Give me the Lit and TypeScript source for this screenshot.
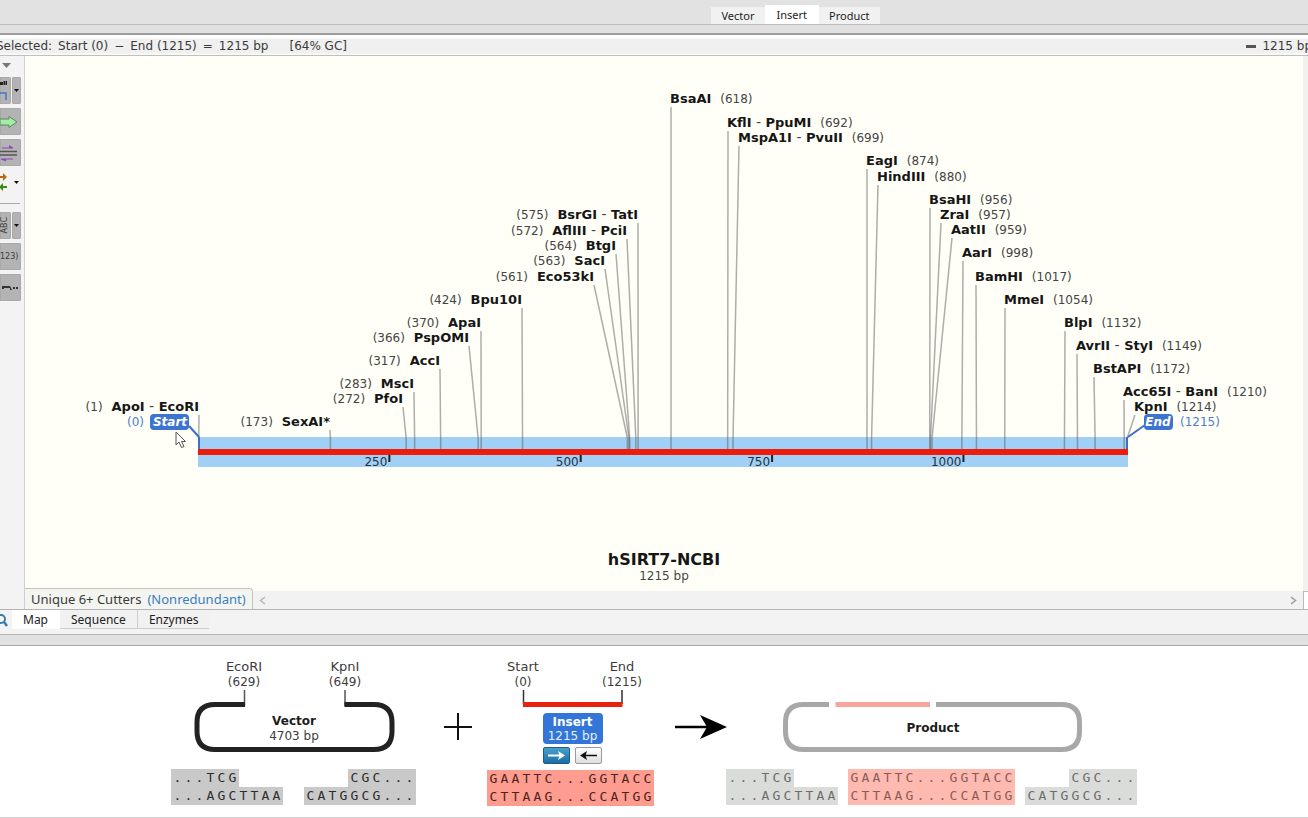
import { LitElement, html, svg, css } from "lit";
import { customElement, state } from "lit/decorators.js";

interface Site {
  names: string[];
  bp: number;
  anchor: number;
  base: number;
}

/* Anchors are measured on a 1278-unit wide map and drawn as percentages. */
const MAP_WIDTH = 1278;
const SEQ_START = 173;
const SEQ_END = 1103;
const LENGTH = 1215;
const pct = (x: number) => `${(x / MAP_WIDTH) * 100}%`;
const bpX = (bp: number) => SEQ_START + ((SEQ_END - SEQ_START) * bp) / LENGTH;

const leftSites: Site[] = [
  { names: ["ApoI", "EcoRI"], bp: 1, anchor: 174, base: 355 },
  { names: ["SexAI*"], bp: 173, anchor: 305, base: 370 },
  { names: ["PfoI"], bp: 272, anchor: 378, base: 347 },
  { names: ["MscI"], bp: 283, anchor: 389, base: 332 },
  { names: ["AccI"], bp: 317, anchor: 415, base: 309 },
  { names: ["PspOMI"], bp: 366, anchor: 444, base: 286 },
  { names: ["ApaI"], bp: 370, anchor: 456, base: 271 },
  { names: ["Bpu10I"], bp: 424, anchor: 497, base: 248 },
  { names: ["Eco53kI"], bp: 561, anchor: 569, base: 225 },
  { names: ["SacI"], bp: 563, anchor: 580, base: 209 },
  { names: ["BtgI"], bp: 564, anchor: 591, base: 194 },
  { names: ["AflIII", "PciI"], bp: 572, anchor: 602, base: 179 },
  { names: ["BsrGI", "TatI"], bp: 575, anchor: 613, base: 163 },
];

const rightSites: Site[] = [
  { names: ["BsaAI"], bp: 618, anchor: 645, base: 47 },
  { names: ["KflI", "PpuMI"], bp: 692, anchor: 702, base: 71 },
  { names: ["MspA1I", "PvuII"], bp: 699, anchor: 713, base: 86 },
  { names: ["EagI"], bp: 874, anchor: 841, base: 109 },
  { names: ["HindIII"], bp: 880, anchor: 852, base: 125 },
  { names: ["BsaHI"], bp: 956, anchor: 904, base: 148 },
  { names: ["ZraI"], bp: 957, anchor: 915, base: 163 },
  { names: ["AatII"], bp: 959, anchor: 926, base: 178 },
  { names: ["AarI"], bp: 998, anchor: 937, base: 201 },
  { names: ["BamHI"], bp: 1017, anchor: 950, base: 225 },
  { names: ["MmeI"], bp: 1054, anchor: 979, base: 248 },
  { names: ["BlpI"], bp: 1132, anchor: 1039, base: 271 },
  { names: ["AvrII", "StyI"], bp: 1149, anchor: 1051, base: 294 },
  { names: ["BstAPI"], bp: 1172, anchor: 1068, base: 317 },
  { names: ["Acc65I", "BanI"], bp: 1210, anchor: 1098, base: 340 },
  { names: ["KpnI"], bp: 1214, anchor: 1109, base: 355 },
];

@customElement("restriction-map")
class RestrictionMap extends LitElement {
  static styles = css`
    :host { display: block; background: #fffff8; }
    .map { display: block; width: 100%; height: 535px; }
    text { font: 12px "DejaVu Sans", sans-serif; fill: #444; white-space: pre; }
    .name { font: bold 13px "DejaVu Sans", sans-serif; fill: #161616; }
    .space { font-size: 14px; }
    .leader { stroke: #5c5c5c; stroke-opacity: 0.5; stroke-width: 1.5; }
    .tick { stroke: #222; stroke-width: 2; }
    .edge { stroke: #3d6fc4; stroke-width: 2; }
    .chip { fill: #3c74cf; }
    .end { font: italic bold 12px "DejaVu Sans", sans-serif; fill: #fff; }
    .blue { fill: #4e7ecb; }
    .title { font: bold 16px "DejaVu Sans", sans-serif; fill: #161616; }
    .scale { fill: #26323c; }
    .mid { text-anchor: middle; }
    .right { text-anchor: end; }
  `;

  private leader(s: Site, dx: number) {
    const x = bpX(s.bp);
    return svg`
      <line class="leader" x1=${pct(s.anchor + dx)} y1=${s.base + 4} x2=${pct(x)} y2="382"></line>
      <line class="leader" x1=${pct(x)} y1="382" x2=${pct(x)} y2="394"></line>`;
  }

  private names(s: Site) {
    return s.names.map((n, i) =>
      i ? svg`<tspan class="space"> - </tspan><tspan class="name">${n}</tspan>` : svg`<tspan class="name">${n}</tspan>`);
  }

  render() {
    return html`<svg class="map" role="img" aria-label="Map of hSIRT7-NCBI">
      <rect x=${pct(SEQ_START)} y="381" width=${pct(SEQ_END - SEQ_START)} height="30" fill="#a0d0f5"></rect>
      ${leftSites.map((s) => svg`${this.leader(s, 0)}
        <text class="right" x=${pct(s.anchor)} y=${s.base}><tspan>(${s.bp})</tspan><tspan class="space">  </tspan>${this.names(s)}</text>`)}
      ${rightSites.map((s) => svg`${this.leader(s, 1)}
        <text x=${pct(s.anchor)} y=${s.base}>${this.names(s)}<tspan class="space">  </tspan><tspan>(${s.bp})</tspan></text>`)}
      <line class="edge" x1=${pct(164)} y1="370" x2=${pct(174)} y2="381"></line>
      <line class="edge" x1=${pct(174)} y1="381" x2=${pct(174)} y2="394"></line>
      <line class="edge" x1=${pct(1120)} y1="369" x2=${pct(1103)} y2="381"></line>
      <line class="edge" x1=${pct(1102)} y1="381" x2=${pct(1102)} y2="394"></line>
      <rect x=${pct(SEQ_START)} y="393" width=${pct(SEQ_END - SEQ_START)} height="6" fill="#ee1c0c"></rect>
      ${[250, 500, 750, 1000].map((n) => svg`
        <line class="tick" x1=${pct(bpX(n))} y1="399" x2=${pct(bpX(n))} y2="406"></line>
        <text class="scale right" x=${pct(bpX(n) - 2)} y="410">${n}</text>`)}
      <text class="blue right" x=${pct(119)} y="370">(0)</text>
      <svg x=${pct(125)} y="358" width="39" height="17" overflow="visible">
        <rect class="chip" width="39" height="16" rx="4"></rect>
        <text class="end mid" x="20" y="12">Start</text>
      </svg>
      <svg x=${pct(1119)} y="358" width="29" height="17" overflow="visible">
        <rect class="chip" width="29" height="16" rx="4"></rect>
        <text class="end mid" x="14" y="12">End</text>
      </svg>
      <text class="blue" x=${pct(1155)} y="370">(1215)</text>
      <text class="title mid" x="50%" y="509">hSIRT7-NCBI</text>
      <text class="mid" x="50%" y="524">1215 bp</text>
      <svg x=${pct(150)} y="375" width="12" height="18">
        <path d="M1 1V14L4 11L6.500 16.500L9 15.500L6.500 10.500H10.500Z" fill="#fff" stroke="#555" stroke-width="1"></path>
      </svg>
    </svg>`;
  }
}

@customElement("cloning-strip")
class CloningStrip extends LitElement {
  static styles = css`
    :host { display: flex; justify-content: center; padding-top: 10px; background: #fff; }
    .strip { display: grid; grid-template-columns: auto 71px auto 72px auto; }
    .col { display: flex; flex-direction: column; align-items: center; }
    .art { display: block; overflow: visible; }
    text { font: 12px "DejaVu Sans", sans-serif; fill: #3c3c3c; text-anchor: middle; }
    .enzyme { font: 13px "DejaVu Sans", sans-serif; }
    .strong { font: bold 12px "DejaVu Sans", sans-serif; fill: #1c1c1c; }
    .chip {
      width: 60px; height: 31px; margin: 0 0 0 4px; padding: 0; border: 0; border-radius: 4px;
      background: #3476d8; color: #e4efff; font: 12px/14px "DejaVu Sans", sans-serif; white-space: nowrap;
    }
    .chip b { display: block; color: #fff; }
    .arrows { display: flex; gap: 5px; padding: 3px 0 6px 4px; }
    .dir {
      display: flex; width: 27px; height: 17px; padding: 0; align-items: center; justify-content: center;
      border: 1px solid #9a9a9a; border-radius: 2px; background: linear-gradient(#fff, #dedede);
    }
    .dir.on { border-color: #1a5c8a; background: linear-gradient(#4a9fc9, #1a6ea5); }
    .seqs { display: flex; justify-content: space-between; align-self: stretch; gap: 10px; }
    .seq { display: flex; flex-direction: column; align-items: flex-start; }
    .seq.end { align-items: flex-end; }
    .row { display: flex; height: 18px; padding: 0 1px; background: #c9c9c9; color: #2c2c2c; font: 13px/18px "DejaVu Sans Mono", monospace; }
    .row span { width: 11px; text-align: center; }
    .ins .row { background: #fe9c8f; color: #4c221c; }
    .faded .row { background: #dadcda; color: #6c6c6c; }
    .faded .ins .row { background: #feb9b0; color: #8a5c56; }
  `;

  @state() private forward = true;

  private strand(t: string) {
    return html`<div class="row">${[...t].map((c) => html`<span>${c}</span>`)}</div>`;
  }

  private seq(kind: string, top: string, bottom: string) {
    return html`<div class="seq ${kind}">${this.strand(top)}${this.strand(bottom)}</div>`;
  }

  render() {
    const left = this.seq("", "...TCG", "...AGCTTAA");
    const insert = this.seq("ins", "GAATTC...GGTACC", "CTTAAG...CCATGG");
    const right = this.seq("end", "CGC...", "CATGGCG...");
    return html`<div class="strip">
      <div class="col">
        <svg class="art" width="245" height="113">
          <g fill="none">
            <path d="M73.500 34V50M174 34V50" stroke="#555" stroke-width="1.500"></path>
            <path d="M74 48.500H44Q26 48.500 26 66.500V75.500Q26 93.500 44 93.500H203Q221 93.500 221 75.500V66.500Q221 48.500 203 48.500H173.500" stroke="#222" stroke-width="5"></path>
          </g>
          <text class="enzyme" x="73" y="15">EcoRI</text><text x="73" y="30">(629)</text>
          <text class="enzyme" x="174" y="15">KpnI</text><text x="174" y="30">(649)</text>
          <text class="strong" x="123" y="69">Vector</text><text x="123" y="84">4703 bp</text>
        </svg>
        <div class="seqs">${left}${right}</div>
      </div>
      <svg class="art" width="71" height="113" aria-hidden="true">
        <path d="M28 71H56M42 57V84" stroke="#111" stroke-width="2"></path>
      </svg>
      <div class="col">
        <svg class="art" width="167" height="57">
          <path d="M36.500 34V48M135 34V48" stroke="#333" stroke-width="1.500"></path>
          <path d="M36 48.500H135.500" stroke="#e8220f" stroke-width="5"></path>
          <text class="enzyme" x="36" y="15">Start</text><text x="36" y="30">(0)</text>
          <text class="enzyme" x="135" y="15">End</text><text x="135" y="30">(1215)</text>
        </svg>
        <button class="chip"><b>Insert</b>1215 bp</button>
        <div class="arrows">
          <button class="dir ${this.forward ? "on" : ""}" aria-label="Forward" @click=${() => (this.forward = true)}>
            <svg width="19" height="9"><path d="M1 4.500H13" stroke="#fff" stroke-width="2"></path><path d="M11 0L18 4.500L11 9L12.500 4.500Z" fill="#fff"></path></svg>
          </button>
          <button class="dir ${this.forward ? "" : "on"}" aria-label="Reverse" @click=${() => (this.forward = false)}>
            <svg width="19" height="9"><path d="M6 4.500H18" stroke="#111" stroke-width="1.500"></path><path d="M8 0L1 4.500L8 9L6.500 4.500Z" fill="#111"></path></svg>
          </button>
        </div>
        <div class="seqs">${insert}</div>
      </div>
      <svg class="art" width="72" height="113" aria-hidden="true">
        <path d="M21 71H54" stroke="#000" stroke-width="2.500"></path>
        <path d="M46 59L73 71L46 83L53 71Z" fill="#000"></path>
      </svg>
      <div class="col">
        <svg class="art" width="411" height="113">
          <g fill="none" stroke-width="5">
            <path d="M103 48.500H77.500Q59.500 48.500 59.500 66.500V75.500Q59.500 93.500 77.500 93.500H335.500Q353.500 93.500 353.500 75.500V66.500Q353.500 48.500 335.500 48.500H210" stroke="#a8a8a8"></path>
            <path d="M109.500 48.500H204" stroke="#f6a69d"></path>
          </g>
          <text class="strong" x="207" y="76">Product</text>
        </svg>
        <div class="seqs faded">${left}${insert}${right}</div>
      </div>
    </div>`;
  }
}

@customElement("app-root")
class AppRoot extends LitElement {
  static styles = css`
    :host { display: flex; flex-direction: column; min-height: 100vh; overflow: hidden; background: #fff; color: #3a3a3a; font: 12px "DejaVu Sans", sans-serif; }
    button { margin: 0; padding: 0; border: 0; font: inherit; color: inherit; }
    .top { display: flex; align-items: flex-end; justify-content: center; height: 24px; padding-left: 283px; border-bottom: 1px solid #bdbdbd; background: #e2e2e2; }
    .tab { height: 17px; padding: 0 10px; background: #f1f1f1; font: 11px/17px "Noto Sans", sans-serif; color: #222; }
    .top .on { height: 19px; padding: 0 12px; background: #fff; }
    .divider { height: 8px; border-bottom: 2px solid #9c9c9c; background: #e1e1e1; }
    .info { display: flex; align-items: center; gap: 6px; height: 18px; padding-top: 2px; border-bottom: 1px solid #bfbfbf; background: linear-gradient(#fff 3px, #f0f0f0 4px, #f0f0f0 18px, #fafafa 19px); white-space: pre; }
    .info .first { margin-left: -4px; }
    .info .gc { margin-left: 15px; }
    .info .length { display: flex; align-items: center; gap: 6px; margin: 0 -4px 0 auto; }
    .bar { width: 10px; height: 3px; background: #555; }
    .body { display: flex; }
    .tools { display: flex; flex-direction: column; width: 25px; gap: 4px; border-right: 1px solid #cfcfcf; background: #f3f3f3; box-sizing: border-box; overflow: hidden; }
    .tool { display: flex; align-items: center; width: 21px; height: 27px; border-radius: 0 2px 2px 0; background: #b3b3b3; box-shadow: inset 0 0 0 1px #a9a9a9; overflow: hidden; font-size: 8px; }
    .split { display: flex; gap: 1px; }
    .split .tool:first-child { width: 11px; }
    .split .tool:last-child { width: 9px; justify-content: center; border-radius: 2px; }
    .plain .tool { height: 24px; background: none; box-shadow: none; }
    .fold { height: 17px; background: none; text-align: left; }
    .rule { height: 1px; width: 20px; margin: 5px 0 4px; background: #aaa; }
    .tool svg, .fold svg { display: block; flex: none; }
    .abc { writing-mode: vertical-rl; transform: rotate(180deg); }
    .main { flex: 1; min-width: 0; display: grid; grid-template-columns: 1fr 5px; }
    .track { background: #f1f1f1; }
    .foot { display: flex; height: 18px; background: #f2f2f2; }
    .corner { border: 1px solid #bbb; border-width: 1px 0 0 1px; background: #fff; }
    .cutters { display: flex; gap: 6px; align-self: flex-end; height: 21px; padding: 0 6px; border: 1px solid #c4c4b4; border-width: 1px 1px 0 0; border-radius: 0 4px 0 0; background: #f4f4f0; font: 13px/20px "Noto Sans", sans-serif; }
    .cutters i { font-style: normal; color: #3a7fc0; }
    .chev { display: flex; align-items: center; padding: 0 6px; background: none; }
    .foot .next { margin-left: auto; }
    .views { display: flex; height: 24px; border: 1px solid #b5b5b5; border-width: 1px 0; background: #f3f3f3; }
    .views .find { width: 12px; background: none; }
    .views .view { height: 19px; padding: 0 11px; border: 1px solid #cdcdcd; border-width: 0 1px 1px 0; background: #f1f1f1; font: 12px/19px "Noto Sans", sans-serif; color: #222; }
    .views .on { border-color: #fff; background: #fff; }
    .views .view:last-child { border-right: 0; }
    .gap { height: 10px; border-bottom: 1px solid #a6a6a6; background: #e1e1e1; }
    .strip { flex: 1; border-bottom: 1px solid #cfcfcf; }
  `;

  @state() private stage = "Insert";
  @state() private view = "Map";

  render() {
    const caret = html`<svg width="5" height="3"><path d="M0 0H5L2.500 3Z" fill="#111"></path></svg>`;
    return html`
      <nav class="top">
        ${["Vector", "Insert", "Product"].map((t) => html`
          <button class="tab ${t === this.stage ? "on" : ""}" @click=${() => (this.stage = t)}>${t}</button>`)}
      </nav>
      <div class="divider"></div>
      <div class="info">
        <span class="first">Selected:</span><span>Start (0)</span><span>−</span><span>End (1215)</span><span>=</span><span>1215 bp</span>
        <span class="gc">[64% GC]</span>
        <span class="length"><span class="bar"></span>1215 bp</span>
      </div>
      <div class="body">
        <aside class="tools">
          <button class="fold" aria-label="Collapse"><svg width="12" height="8"><path d="M2 2H11L6.500 7Z" fill="#777"></path></svg></button>
          <div class="split">
            <button class="tool" aria-label="Enzymes"><svg width="11" height="27"><path d="M0 5H3V8H0ZM3.500 4H5V8H3.500ZM5.500 4H7V8H5.500Z" fill="#222"></path><path d="M0 16H6V23" fill="none" stroke="#3f78c8" stroke-width="1.500"></path></svg></button>
            <button class="tool" aria-label="Enzyme options">${caret}</button>
          </div>
          <button class="tool" aria-label="Features"><svg width="20" height="14"><path d="M0 4H9V1.500L17 7L9 12.500V10H0Z" fill="#a6eba6" stroke="#5a8a5a"></path></svg></button>
          <button class="tool" aria-label="Primers"><svg width="20" height="18"><path d="M0 7.500H17M0 11H17" stroke="#555" stroke-width="1.500"></path><path d="M2 3.500H9V1L13 3.500V4.500H2ZM13 15.500H6V17.500L1 15.500V14.500H13Z" fill="#9440c0"></path></svg></button>
          <div class="split plain">
            <button class="tool" aria-label="Translations"><svg width="11" height="20"><path d="M0 4H3V1L7 5L3 9V6H0Z" fill="#b86a14"></path><path d="M7 14H3V11L-1 15L3 19V16H7Z" fill="#3c8a14"></path></svg></button>
            <button class="tool" aria-label="Translation options">${caret}</button>
          </div>
          <div class="rule"></div>
          <div class="split">
            <button class="tool"><span class="abc">ABC</span></button>
            <button class="tool" aria-label="Label options">${caret}</button>
          </div>
          <button class="tool">123)</button>
          <button class="tool" aria-label="Line style"><svg width="20" height="8"><path d="M2 5V2H10L12 6H10V4H4V5ZM13 3H15V5H13ZM16 3H18V5H16Z" fill="#333"></path></svg></button>
        </aside>
        <section class="main">
          <restriction-map></restriction-map>
          <div class="track"></div>
          <div class="foot">
            <button class="cutters"><span>Unique 6+ Cutters</span><i>(Nonredundant)</i></button>
            <button class="chev" aria-label="Scroll left"><svg width="7" height="9"><path d="M6 1L1.500 4.500L6 8" fill="none" stroke="#b4b4b4" stroke-width="1.500"></path></svg></button>
            <button class="chev next" aria-label="Scroll right"><svg width="7" height="9"><path d="M1 1L5.500 4.500L1 8" fill="none" stroke="#9a9a9a" stroke-width="1.500"></path></svg></button>
          </div>
          <div class="corner"></div>
        </section>
      </div>
      <nav class="views">
        <button class="find" aria-label="Find"><svg width="12" height="19"><circle cx="1" cy="8" r="4" fill="none" stroke="#3a7cae" stroke-width="2"></circle><path d="M4 11L7 15" stroke="#3a7cae" stroke-width="2.500"></path></svg></button>
        ${["Map", "Sequence", "Enzymes"].map((t) => html`
          <button class="view ${t === this.view ? "on" : ""}" @click=${() => (this.view = t)}>${t}</button>`)}
      </nav>
      <div class="gap"></div>
      <cloning-strip class="strip"></cloning-strip>
    `;
  }
}
